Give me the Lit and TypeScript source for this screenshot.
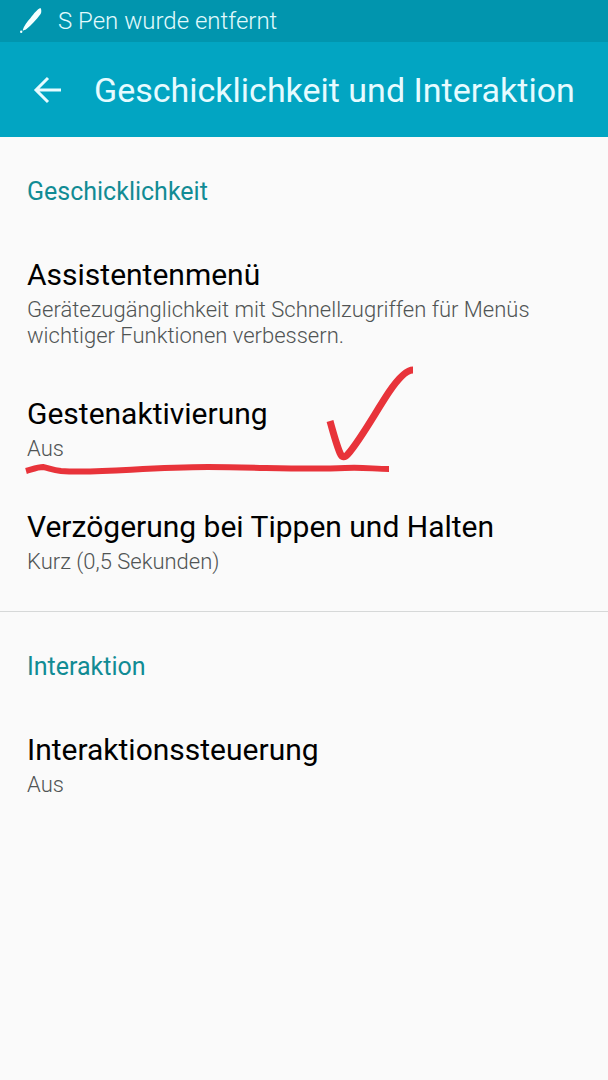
import { LitElement, html, css, svg, nothing } from "lit";
import { customElement, property } from "lit/decorators.js";

interface Setting {
  title: string;
  summary: string;
  marked?: boolean;
}

interface Section {
  heading: string;
  settings: Setting[];
}

const SECTIONS: Section[] = [
  {
    heading: "Geschicklichkeit",
    settings: [
      {
        title: "Assistentenmenü",
        summary: "Gerätezugänglichkeit mit Schnellzugriffen für Menüs wichtiger Funktionen verbessern.",
      },
      { title: "Gestenaktivierung", summary: "Aus", marked: true },
      { title: "Verzögerung bei Tippen und Halten", summary: "Kurz (0,5 Sekunden)" },
    ],
  },
  {
    heading: "Interaktion",
    settings: [{ title: "Interaktionssteuerung", summary: "Aus" }],
  },
];

// Hand-drawn tick and underline
const marker = svg`
  <path d="M330 49 C333 60 337 74 340 81 Q343 88 348 82 C361 67 375 41 389 20 Q404 -2 413 -2" stroke-width="7"/>
  <path d="M26 99 C33 97 38 95 43 95 C49 96 52 98 61 99 C98 102 145 95 208 95 C262 95 300 98 345 96 C363 95 374 97 389 97" stroke-width="6"/>
`;

@customElement("setting-row")
class SettingRow extends LitElement {
  @property() heading = "";
  @property() summary = "";
  @property({ type: Boolean }) marked = false;

  static styles = css`
    :host {
      display: block;
      position: relative;
    }
    .row {
      display: flex;
      flex-direction: column;
      gap: 4px;
      width: 100%;
      padding: 24px 27px 23px;
      border: 0;
      background: none;
      font-family: inherit;
      text-align: left;
      cursor: pointer;
    }
    .title {
      color: #000;
      font-size: 30px;
      line-height: 36px;
    }
    .summary {
      color: #505454;
      font-size: 22px;
      font-weight: 300;
      line-height: 26px;
    }
    .marker {
      position: absolute;
      top: 0;
      left: 0;
      overflow: visible;
      pointer-events: none;
      fill: none;
      stroke: #e8333a;
      stroke-linejoin: round;
    }
  `;

  render() {
    return html`
      <button class="row" type="button">
        <span class="title">${this.heading}</span>
        <span class="summary">${this.summary}</span>
      </button>
      ${this.marked
        ? html`<svg class="marker" width="420" height="113" aria-hidden="true">${marker}</svg>`
        : nothing}
    `;
  }
}

@customElement("app-root")
class AppRoot extends LitElement {
  static styles = css`
    :host {
      display: block;
      min-height: 100vh;
      background: #fafafa;
      font-family: Roboto, "Noto Sans", sans-serif;
    }
    .status {
      display: flex;
      align-items: center;
      gap: 15px;
      height: 42px;
      padding: 0 19px;
      background: #0195ae;
      color: #e2fafd;
      font-size: 24px;
      font-weight: 300;
      line-height: 28px;
    }
    .pen {
      width: 24px;
      height: 28px;
      fill: #f4ffff;
    }
    .bar {
      display: flex;
      align-items: center;
      gap: 32px;
      height: 95px;
      padding: 0 32px;
      background: #02a5c2;
      color: #e6fbff;
    }
    .back {
      display: flex;
      padding: 0;
      border: 0;
      background: none;
      color: inherit;
      cursor: pointer;
    }
    .arrow {
      width: 30px;
      height: 30px;
      fill: none;
      stroke: currentColor;
      stroke-width: 3;
    }
    .name {
      margin: 0;
      font-size: 34px;
      font-weight: 400;
      line-height: 40px;
    }
    .section + .section {
      margin-top: 13px;
      border-top: 1px solid #d6d8d8;
    }
    .heading {
      margin: 0;
      padding: 40px 27px 26px;
      color: #118b94;
      font-size: 25px;
      font-weight: 400;
      line-height: 30px;
    }
  `;

  render() {
    return html`
      <div class="status">
        <svg class="pen" viewBox="0 0 24 28" aria-hidden="true">
          <path d="M3.6 23.6 C4.5 19.5 8 15 11.5 11 C15 6.5 18.5 2 21.5 1 C22.6 2.5 22.6 5.5 21.6 7 C17.5 12.5 12 18.5 7.5 22 C6 23 4.8 23.4 3.6 23.6 Z" />
          <circle cx="2.2" cy="24.8" r="1.2" />
        </svg>
        <span>S Pen wurde entfernt</span>
      </div>
      <header class="bar">
        <button class="back" type="button" aria-label="Zurück">
          <svg class="arrow" viewBox="0 0 30 30" aria-hidden="true">
            <path d="M29 15 H4 M16 3 L4 15 L16 27" />
          </svg>
        </button>
        <h1 class="name">Geschicklichkeit und Interaktion</h1>
      </header>
      <main>
        ${SECTIONS.map(
          (section) => html`
            <section class="section">
              <h2 class="heading">${section.heading}</h2>
              ${section.settings.map(
                (s) => html`<setting-row
                  .heading=${s.title}
                  .summary=${s.summary}
                  .marked=${s.marked ?? false}
                ></setting-row>`
              )}
            </section>
          `
        )}
      </main>
    `;
  }
}
